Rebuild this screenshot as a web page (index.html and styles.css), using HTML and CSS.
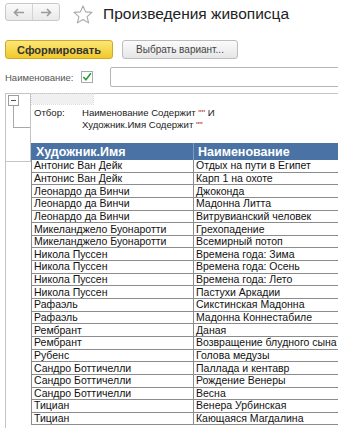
FILE: index.html
```html
<!DOCTYPE html>
<html lang="ru">
<head>
    <meta charset="UTF-8">
    <meta name="viewport" content="width=device-width, initial-scale=1.0">
    <title>Произведения живописца</title>
    <link rel="stylesheet" href="styles.css">
</head>
<body>
    <div class="titlebar">
        <div class="nav">
            <span class="nav-btn">
                <svg width="12" height="9" viewBox="0 0 12 9"><path d="M11 4.5H2M5 1L1.5 4.5L5 8" fill="none" stroke="#9a9a9a" stroke-width="1.6"/></svg>
            </span>
            <span class="nav-btn">
                <svg width="12" height="9" viewBox="0 0 12 9"><path d="M1 4.5H10M7 1L10.5 4.5L7 8" fill="none" stroke="#9a9a9a" stroke-width="1.6"/></svg>
            </span>
        </div>
        <svg class="star" width="20" height="19" viewBox="0 0 20 19">
            <path d="M10 1L12.6 6.9L19 7.4L14.1 11.6L15.6 17.9L10 14.5L4.4 17.9L5.9 11.6L1 7.4L7.4 6.9Z" fill="none" stroke="#a8a8a8" stroke-width="1.1" stroke-linejoin="round"/>
        </svg>
        <h1>Произведения живописца</h1>
    </div>

    <div class="toolbar">
        <button class="btn btn-main">Сформировать</button>
        <button class="btn">Выбрать вариант...</button>
    </div>

    <div class="filter">
        <label>Наименование:</label>
        <span class="check">
            <svg width="11" height="10" viewBox="0 0 11 10"><path d="M1.5 5L4.3 8L9.8 1" fill="none" stroke="#2a9a3a" stroke-width="1.8"/></svg>
        </span>
        <div class="field"></div>
    </div>

    <div class="report">
        <div class="gutter">
            <span class="minus"></span>
            <span class="tree"></span>
        </div>
        <div class="sheet">
            <div class="sheet-head">
                <div class="cursor"></div>
                <div class="selection">
                    <span class="sel-label">Отбор:</span>
                    <span>Наименование Содержит <span class="quote">""</span> И<br>Художник.Имя Содержит <span class="quote">""</span></span>
                </div>
            </div>
            <table>
                <thead>
                    <tr><th>Художник.Имя</th><th>Наименование</th></tr>
                </thead>
                <tbody>
                    <tr><td>Антонис Ван Дейк</td><td>Отдых на пути в Египет</td></tr>
                    <tr><td>Антонис Ван Дейк</td><td>Карп 1 на охоте</td></tr>
                    <tr><td>Леонардо да Винчи</td><td>Джоконда</td></tr>
                    <tr><td>Леонардо да Винчи</td><td>Мадонна Литта</td></tr>
                    <tr><td>Леонардо да Винчи</td><td>Витрувианский человек</td></tr>
                    <tr><td>Микеланджело Буонаротти</td><td>Грехопадение</td></tr>
                    <tr><td>Микеланджело Буонаротти</td><td>Всемирный потоп</td></tr>
                    <tr><td>Никола Пуссен</td><td>Времена года: Зима</td></tr>
                    <tr><td>Никола Пуссен</td><td>Времена года: Осень</td></tr>
                    <tr><td>Никола Пуссен</td><td>Времена года: Лето</td></tr>
                    <tr><td>Никола Пуссен</td><td>Пастухи Аркадии</td></tr>
                    <tr><td>Рафаэль</td><td>Сикстинская Мадонна</td></tr>
                    <tr><td>Рафаэль</td><td>Мадонна Коннестабиле</td></tr>
                    <tr><td>Рембрант</td><td>Даная</td></tr>
                    <tr><td>Рембрант</td><td>Возвращение блудного сына</td></tr>
                    <tr><td>Рубенс</td><td>Голова медузы</td></tr>
                    <tr><td>Сандро Боттичелли</td><td>Паллада и кентавр</td></tr>
                    <tr><td>Сандро Боттичелли</td><td>Рождение Венеры</td></tr>
                    <tr><td>Сандро Боттичелли</td><td>Весна</td></tr>
                    <tr><td>Тициан</td><td>Венера Урбинская</td></tr>
                    <tr><td>Тициан</td><td>Кающаяся Магдалина</td></tr>
                </tbody>
            </table>
        </div>
    </div>
</body>
</html>
```

FILE: styles.css
```css
body {
    margin: 0;
    background-color: #ffffff;
    font-family: "Liberation Sans", Arial, sans-serif;
    color: #222;
    overflow: hidden;
}

.titlebar {
    display: flex;
    align-items: flex-start;
    height: 30px;
    padding: 3px 0 0 5px;
    box-sizing: border-box;
}

.nav {
    display: flex;
    width: 55px;
    height: 18px;
    border: 1px solid #c9c9c9;
    border-radius: 3px;
    background: linear-gradient(#fafafa, #e9e9e9);
    box-sizing: border-box;
}

.nav-btn {
    flex: 1;
    display: flex;
    align-items: center;
    justify-content: center;
}

.nav-btn + .nav-btn {
    border-left: 1px solid #d4d4d4;
}

.star {
    margin: 2px 0 0 13px;
}

h1 {
    margin: 0 0 0 10px;
    font-size: 15.5px;
    font-weight: normal;
    line-height: 22px;
    color: #222;
}

.toolbar {
    display: flex;
    gap: 9px;
    padding: 10px 0 0 5px;
}

.btn {
    height: 19px;
    width: 116px;
    padding: 0;
    border: 1px solid #bdbdbd;
    border-radius: 3px;
    background: linear-gradient(#fbfbfb, #e6e6e6);
    font-family: "Liberation Sans", Arial, sans-serif;
    font-size: 10px;
    color: #444;
}

.btn-main {
    width: 108px;
    border-color: #cfa92a;
    background: linear-gradient(#fce777, #f0c92a);
    font-size: 11px;
    font-weight: bold;
    color: #333;
}

.filter {
    display: flex;
    align-items: center;
    height: 20px;
    margin-top: 8px;
    padding-left: 5px;
}

.filter label {
    font-size: 9.5px;
    color: #555;
}

.check {
    display: flex;
    align-items: center;
    justify-content: center;
    width: 12px;
    height: 12px;
    margin-left: 7px;
    border: 1px solid #a9a9a9;
    box-sizing: border-box;
    background-color: #fff;
}

.field {
    flex: 1;
    height: 20px;
    margin-left: 17px;
    margin-right: -10px;
    border: 1px solid #b5b5b5;
    border-radius: 2px;
    box-sizing: border-box;
}

.report {
    display: flex;
    align-items: flex-start;
    margin: 6px 0 0 5px;
    border-top: 1px solid #c4c4c4;
    border-left: 1px solid #c4c4c4;
    height: 340px;
}

.gutter {
    width: 24px;
    height: 67px;
    flex-shrink: 0;
    border-right: 1px solid #c4c4c4;
    border-bottom: 1px solid #c4c4c4;
    box-sizing: content-box;
}

.minus {
    display: block;
    position: relative;
    width: 11px;
    height: 11px;
    margin: 1px 0 0 2px;
    border: 1px solid #9c9c9c;
    box-sizing: border-box;
}

.minus::after {
    content: "";
    position: absolute;
    left: 2px;
    right: 2px;
    top: 4px;
    border-top: 1px solid #555;
}

.tree {
    display: block;
    width: 16px;
    height: 21px;
    margin-left: 7px;
    border-left: 1px solid #a8a8a8;
    border-bottom: 1px solid #a8a8a8;
}

.sheet {
    flex: 1;
    min-width: 0;
}

.sheet-head {
    height: 49px;
}

.cursor {
    width: 61px;
    height: 10px;
    margin-left: 1px;
    background-color: #f0f0f0;
    outline: 1px dotted #dcdcdc;
}

.selection {
    display: flex;
    margin-top: 3px;
    padding-left: 3px;
    font-size: 9.6px;
    line-height: 12px;
    color: #222;
}

.sel-label {
    width: 48px;
}

.quote {
    color: #b03030;
}

table {
    width: 330px;
    border-collapse: separate;
    border-spacing: 0;
    table-layout: fixed;
    font-size: 10.5px;
    white-space: nowrap;
}

th {
    height: 17px;
    padding: 0 0 0 5px;
    background-color: #4a72a4;
    color: #fff;
    font-size: 12.5px;
    font-weight: bold;
    text-align: left;
    border-right: 1px solid #7d9cc2;
    box-sizing: border-box;
}

th:first-child {
    width: 163px;
}

th + th {
    padding-left: 4px;
}

td {
    height: 12.65px;
    padding: 0 0 0 2px;
    line-height: 11px;
    border-bottom: 1px solid #8c8c8c;
    border-right: 1px solid #8c8c8c;
    box-sizing: border-box;
    color: #111;
}

td:first-child {
    border-left: 1px solid #8c8c8c;
}
```
